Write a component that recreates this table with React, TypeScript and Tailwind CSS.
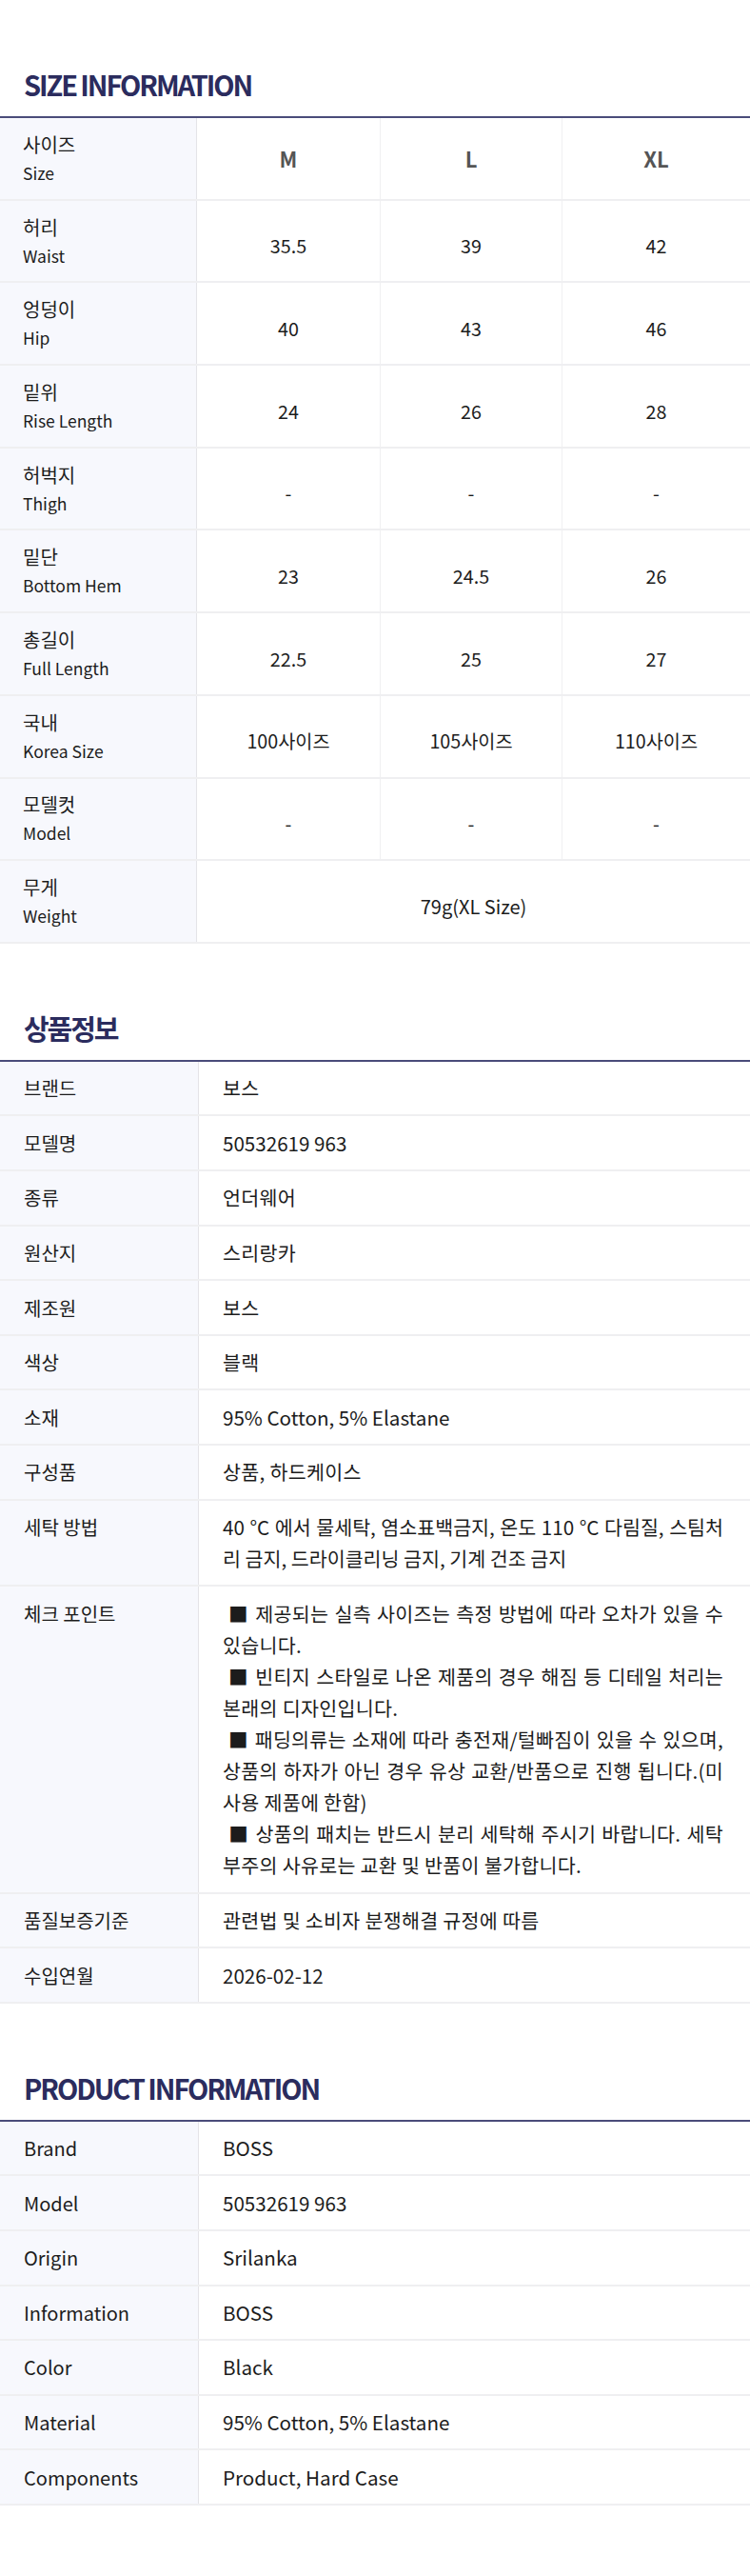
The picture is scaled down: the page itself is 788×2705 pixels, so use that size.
import React from "react";

const font = "font-['Noto_Sans_CJK_KR','Noto_Sans',sans-serif]";

const sizeRows: [string, string, string, string, string][] = [
  ["허리", "Waist", "35.5", "39", "42"],
  ["엉덩이", "Hip", "40", "43", "46"],
  ["밑위", "Rise Length", "24", "26", "28"],
  ["허벅지", "Thigh", "-", "-", "-"],
  ["밑단", "Bottom Hem", "23", "24.5", "26"],
  ["총길이", "Full Length", "22.5", "25", "27"],
  ["국내", "Korea Size", "100사이즈", "105사이즈", "110사이즈"],
  ["모델컷", "Model", "-", "-", "-"],
];

const checkPoints = [
  "\u00a0■ 제공되는 실측 사이즈는 측정 방법에 따라 오차가 있을 수 있습니다.",
  "\u00a0■ 빈티지 스타일로 나온 제품의 경우 해짐 등 디테일 처리는 본래의 디자인입니다.",
  "\u00a0■ 패딩의류는 소재에 따라 충전재/털빠짐이 있을 수 있으며, 상품의 하자가 아닌 경우 유상 교환/반품으로 진행 됩니다.(미사용 제품에 한함)",
  "\u00a0■ 상품의 패치는 반드시 분리 세탁해 주시기 바랍니다. 세탁 부주의 사유로는 교환 및 반품이 불가합니다.",
];

type Row = { k: string; v: React.ReactNode; wide?: boolean };

const infoRows: Row[] = [
  { k: "브랜드", v: "보스", wide: true },
  { k: "모델명", v: "50532619 963" },
  { k: "종류", v: "언더웨어", wide: true },
  { k: "원산지", v: "스리랑카", wide: true },
  { k: "제조원", v: "보스", wide: true },
  { k: "색상", v: "블랙", wide: true },
  { k: "소재", v: "95% Cotton, 5% Elastane" },
  { k: "구성품", v: "상품, 하드케이스", wide: true },
  { k: "세탁 방법", v: "40 °C 에서 물세탁, 염소표백금지, 온도 110 °C 다림질, 스팀처리 금지, 드라이클리닝 금지, 기계 건조 금지" },
  {
    k: "체크 포인트",
    v: (
      <>
        {checkPoints.map((t, i) => (
          <p key={i}>{t}</p>
        ))}
      </>
    ),
    wide: true,
  },
  { k: "품질보증기준", v: "관련법 및 소비자 분쟁해결 규정에 따름", wide: true },
  { k: "수입연월", v: "2026-02-12" },
];

const enRows: Row[] = [
  { k: "Brand", v: "BOSS" },
  { k: "Model", v: "50532619 963" },
  { k: "Origin", v: "Srilanka" },
  { k: "Information", v: "BOSS" },
  { k: "Color", v: "Black" },
  { k: "Material", v: "95% Cotton, 5% Elastane" },
  { k: "Components", v: "Product, Hard Case" },
];

function Title({ children }: { children: React.ReactNode }) {
  return (
    <h2 className="pl-[25px] text-[29px] leading-[40px] font-bold text-[#2b2c5e] mb-[14px] tracking-[-2.1px]">
      {children}
    </h2>
  );
}

function InfoTable({ rows }: { rows: Row[] }) {
  return (
    <div className="border-t-2 border-[#4a4c7a]">
      {rows.map(({ k, v, wide }, i) => (
        <div key={i} className="grid grid-cols-[209px_1fr] border-b-2 border-[#efeff1]">
          <div className="bg-[#f7f8fd] border-r border-[#e4e4e8] px-[25px] py-[11.25px] text-[20px] leading-[33.1px] text-[#1c1c1c]">
            {k}
          </div>
          <div
            className={`pl-[25px] pr-[28px] py-[11.25px] text-[20.6px] leading-[33.1px] text-[#1c1c1c] text-justify ${
              wide ? "tracking-[0.3px]" : ""
            }`}
          >
            {v}
          </div>
        </div>
      ))}
    </div>
  );
}

export default function App() {
  return (
    <div className={`${font} bg-white w-[788px] pb-[66px]`}>
      {/* SIZE INFORMATION */}
      <section className="pt-[68px]">
        <Title>SIZE INFORMATION</Title>
        <div className="border-t-2 border-[#4a4c7a]">
          <div className="grid grid-cols-[207px_193px_191px_1fr] h-[86.7px] border-b-2 border-[#efeff1]">
            <div className="bg-[#f7f8fd] border-r border-[#e4e4e8] pl-[24px] flex flex-col justify-center">
              <span className="text-[20px] leading-[31px] text-[#1c1c1c]">사이즈</span>
              <span className="text-[17.5px] leading-[30px] text-[#1c1c1c]">Size</span>
            </div>
            {["M", "L", "XL"].map((s, i) => (
              <div
                key={s}
                className={`flex items-center justify-center text-[22px] font-bold text-[#555555] ${i < 2 ? "border-r border-[#f0f0f2]" : ""}`}
              >
                {s}
              </div>
            ))}
          </div>
          {sizeRows.map(([ko, en, a, b, c]) => (
            <div key={ko} className="grid grid-cols-[207px_193px_191px_1fr] h-[86.7px] border-b-2 border-[#efeff1]">
              <div className="bg-[#f7f8fd] border-r border-[#e4e4e8] pl-[24px] flex flex-col justify-center">
                <span className="text-[20px] leading-[31px] text-[#1c1c1c]">{ko}</span>
                <span className="text-[17.5px] leading-[30px] text-[#1c1c1c]">{en}</span>
              </div>
              {[a, b, c].map((v, i) => (
                <div
                  key={i}
                  className={`flex items-center justify-center pt-[10px] text-[19.7px] text-[#1c1c1c] ${i < 2 ? "border-r border-[#f0f0f2]" : ""}`}
                >
                  {v}
                </div>
              ))}
            </div>
          ))}
          <div className="grid grid-cols-[207px_1fr] h-[86.7px] border-b-2 border-[#efeff1]">
            <div className="bg-[#f7f8fd] border-r border-[#e4e4e8] pl-[24px] flex flex-col justify-center">
              <span className="text-[20px] leading-[31px] text-[#1c1c1c]">무게</span>
              <span className="text-[17.5px] leading-[30px] text-[#1c1c1c]">Weight</span>
            </div>
            <div className="flex items-center justify-center pt-[10px] text-[20px] text-[#1c1c1c]">79g(XL Size)</div>
          </div>
        </div>
      </section>

      {/* 상품정보 */}
      <section className="pt-[68px]">
        <Title>상품정보</Title>
        <InfoTable rows={infoRows} />
      </section>

      {/* PRODUCT INFORMATION */}
      <section className="pt-[68px]">
        <Title>PRODUCT INFORMATION</Title>
        <InfoTable rows={enRows} />
      </section>
    </div>
  );
}
